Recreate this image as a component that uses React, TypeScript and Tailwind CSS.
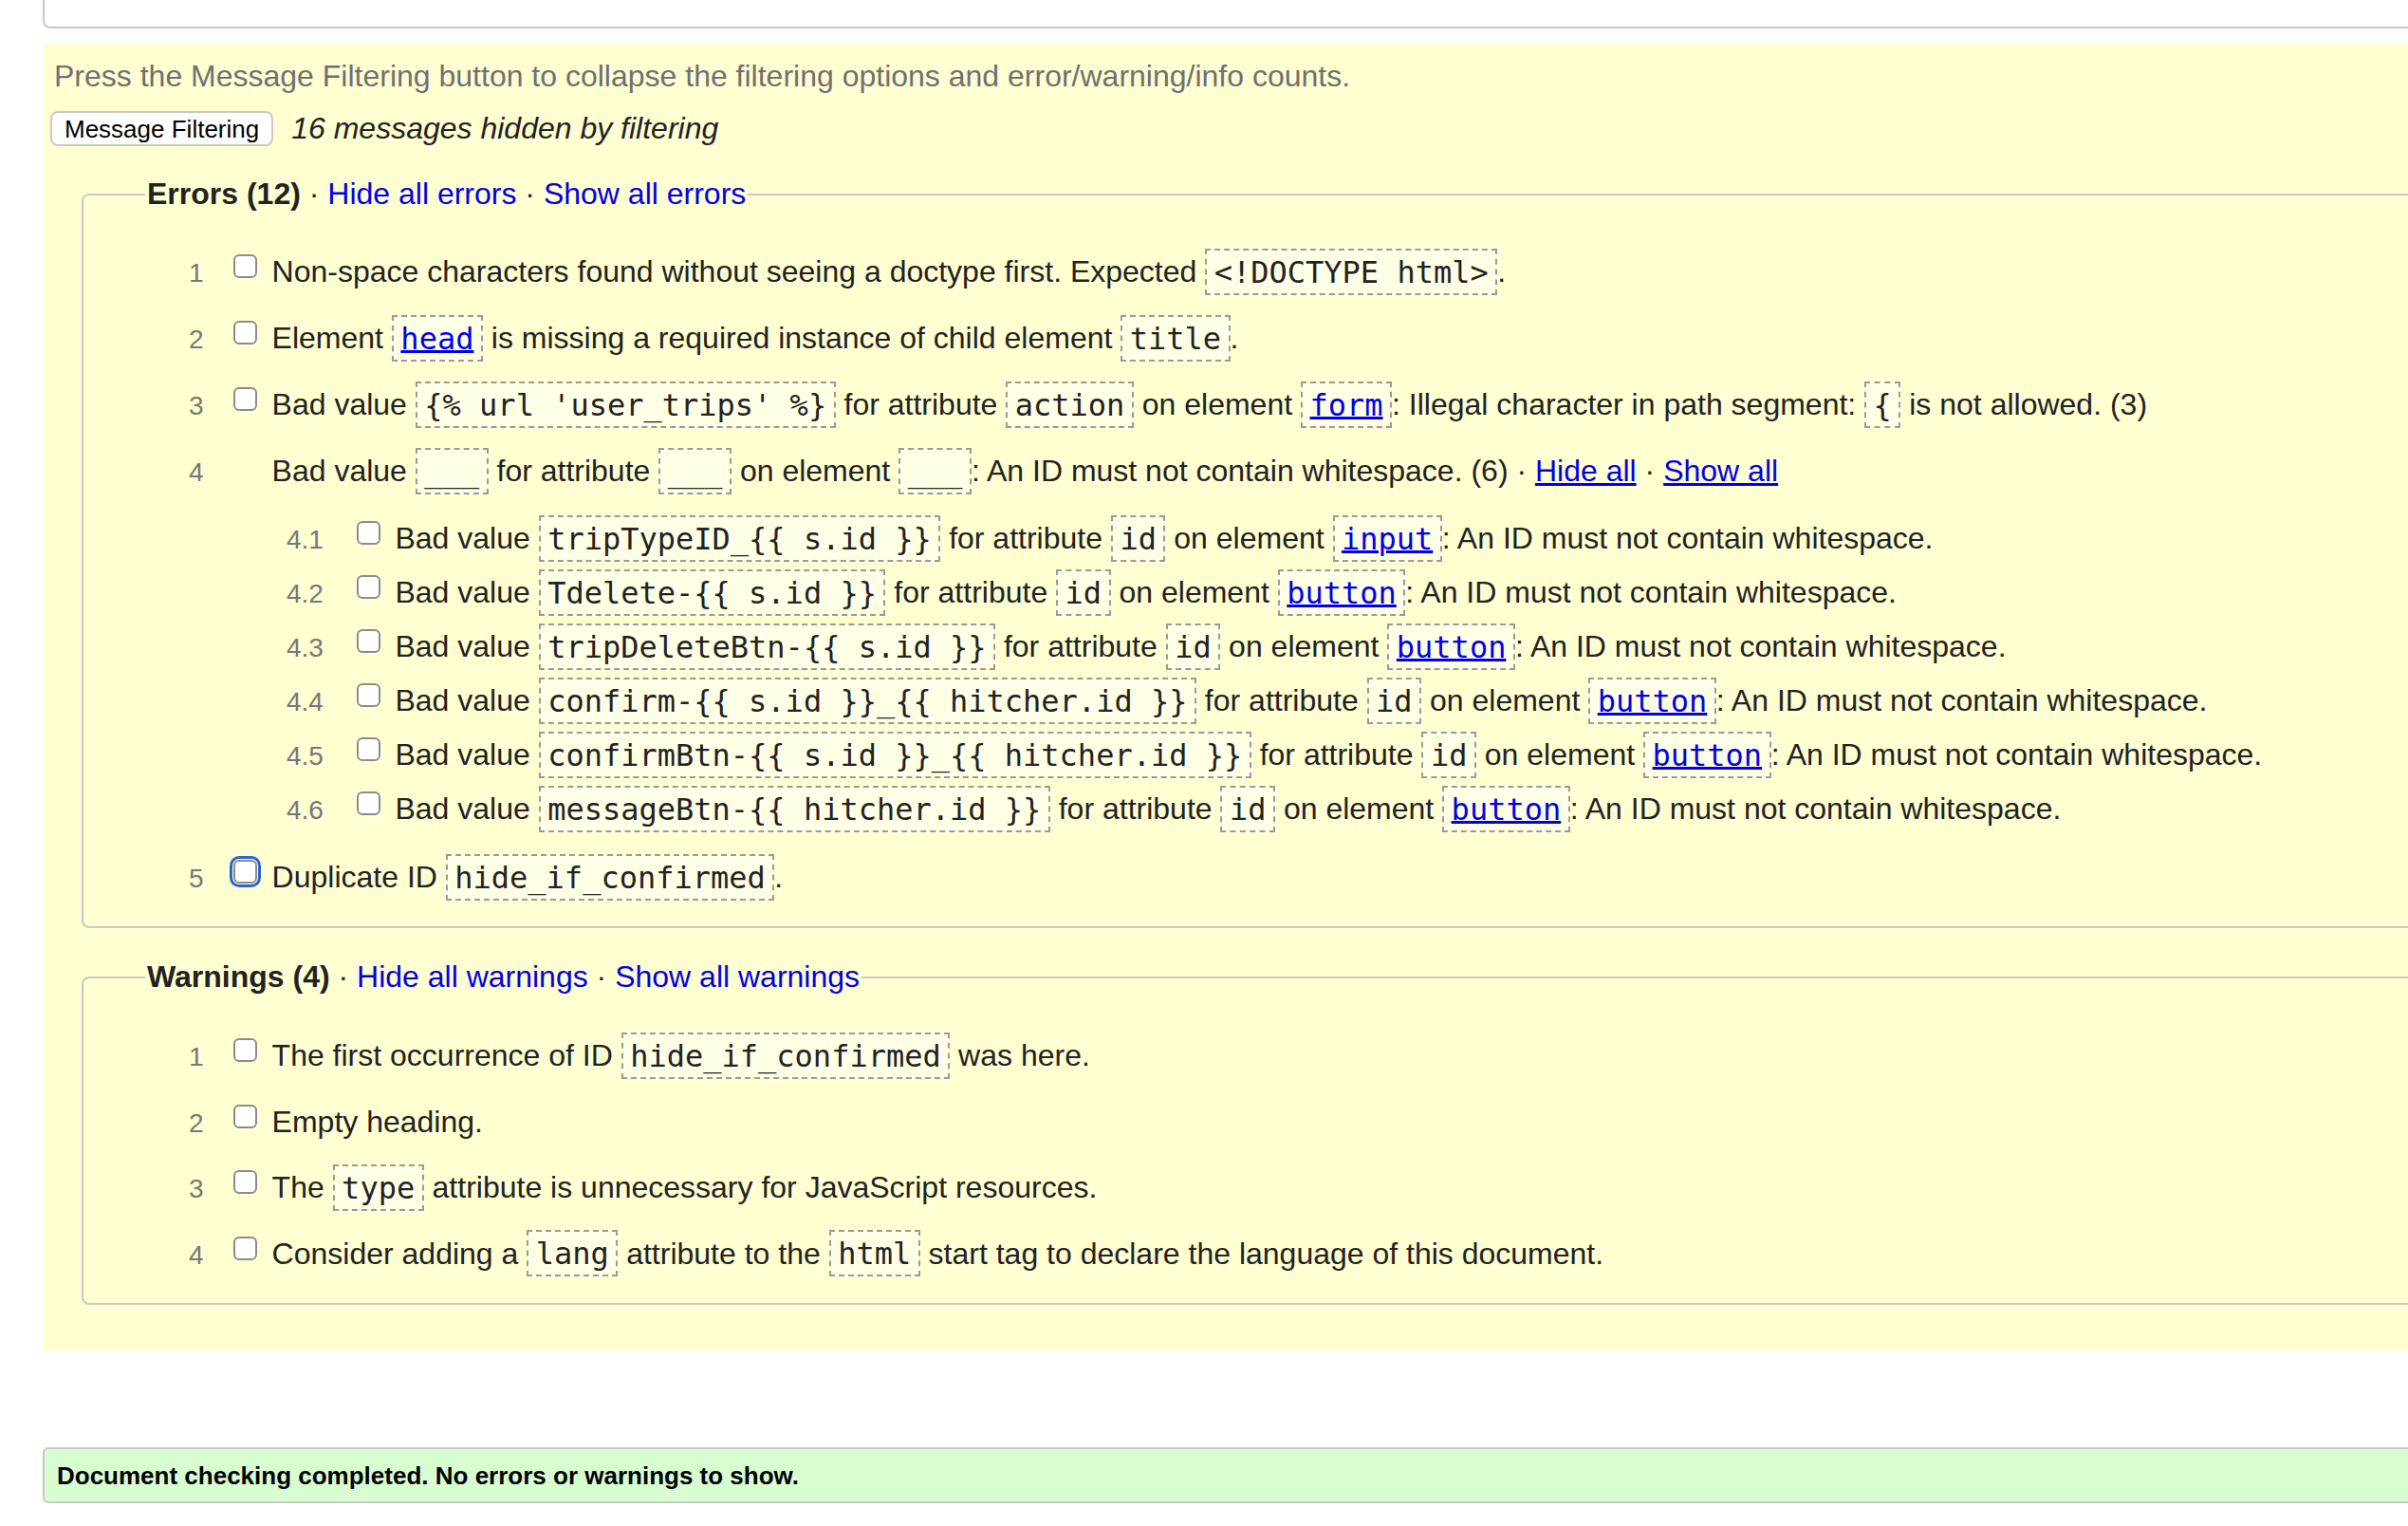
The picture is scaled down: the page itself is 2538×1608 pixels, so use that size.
import type { FC, ReactNode } from "react";

const Code: FC<{ children: ReactNode }> = ({ children }) => (
  <code className="font-['DejaVu_Sans_Mono',monospace] text-[32px] whitespace-pre border-2 border-dashed border-[#9a9a9a] bg-[#ffffe6] px-[7.5px] py-[3.5px]">
    {children}
  </code>
);

const CodeLink: FC<{ children: ReactNode }> = ({ children }) => (
  <Code>
    <a href="#" className="text-[#0000ee] underline decoration-[3px]">
      {children}
    </a>
  </Code>
);

const Link: FC<{ children: ReactNode; underline?: boolean }> = ({
  children,
  underline,
}) => (
  <a
    href="#"
    className={`text-[#0000ee] ${underline ? "underline decoration-[3px]" : ""}`}
  >
    {children}
  </a>
);

type RowProps = {
  num: string;
  sub?: boolean;
  noCheck?: boolean;
  focused?: boolean;
  children: ReactNode;
};

const Row: FC<RowProps> = ({ num, sub, noCheck, focused, children }) => (
  <div className="whitespace-nowrap leading-[37px]">
    <span className="text-[28px] leading-[30px] text-[#777]">{num}</span>
    <input
      type="checkbox"
      className={`${sub ? "ml-[35px]" : "ml-[31.5px]"} mb-[4px] inline-block align-baseline appearance-none w-[25px] h-[25px] border-2 border-[#8c8c8c] rounded-[6px] bg-white ${
        noCheck ? "invisible" : ""
      } ${focused ? "outline-3 outline-offset-1 outline-[#2a63d8]" : ""}`}
    />
    <span className="ml-[15.5px]">{children}</span>
  </div>
);

const Legend: FC<{ title: string; hide: string; show: string }> = ({
  title,
  hide,
  show,
}) => (
  <legend className="ml-[65px] px-[2px] leading-[37px]">
    <b>{title}</b> · <Link>{hide}</Link> · <Link>{show}</Link>
  </legend>
);

const subErrors = [
  { num: "4.1", value: "tripTypeID_{{ s.id }}", el: "input" },
  { num: "4.2", value: "Tdelete-{{ s.id }}", el: "button" },
  { num: "4.3", value: "tripDeleteBtn-{{ s.id }}", el: "button" },
  { num: "4.4", value: "confirm-{{ s.id }}_{{ hitcher.id }}", el: "button" },
  { num: "4.5", value: "confirmBtn-{{ s.id }}_{{ hitcher.id }}", el: "button" },
  { num: "4.6", value: "messageBtn-{{ hitcher.id }}", el: "button" },
];

export default function App() {
  return (
    <div className="w-[2538px] h-[1608px] overflow-hidden bg-white text-[32px] text-[#222] font-['Liberation_Sans',Arial,sans-serif]">
      {/* box above, mostly scrolled away */}
      <div className="ml-[45px] w-[2600px] h-[30px] border-2 border-t-0 border-[#c8c8c8] rounded-b-lg" />

      <div className="mt-[16px] ml-[45px] w-[2600px] bg-[#ffffd2] pl-[8px] pt-[15.5px] pb-[49.5px]">
        <p className="pl-[4px] leading-[37px] text-[#707070]">
          Press the Message Filtering button to collapse the filtering options
          and error/warning/info counts.
        </p>

        <div className="mt-[18.5px] flex items-center">
          <button className="h-[37px] px-[13px] border-2 border-[#c8c8c8] rounded-[8px] bg-white text-[26px] leading-[30px] text-black">
            Message Filtering
          </button>
          <span className="ml-[19px] italic leading-[37px]">
            16 messages hidden by filtering
          </span>
        </div>

        <fieldset className="mt-[32px] ml-[33px] border-2 border-[#c8c8c8] rounded-lg">
          <Legend title="Errors (12)" hide="Hide all errors" show="Show all errors" />
          <div className="pl-[111px] pt-[45px] pb-[33px] flex flex-col gap-[33px]">
            <Row num="1">
              Non-space characters found without seeing a doctype first.
              Expected <Code>{"<!DOCTYPE html>"}</Code>.
            </Row>
            <Row num="2">
              Element <CodeLink>head</CodeLink> is missing a required instance
              of child element <Code>title</Code>.
            </Row>
            <Row num="3">
              Bad value <Code>{"{% url 'user_trips' %}"}</Code> for attribute{" "}
              <Code>action</Code> on element <CodeLink>form</CodeLink>: Illegal
              character in path segment: <Code>{"{"}</Code> is not allowed. (3)
            </Row>
            <div className="pb-[2px]">
              <Row num="4" noCheck>
                Bad value <Code>___</Code> for attribute <Code>___</Code> on
                element <Code>___</Code>: An ID must not contain whitespace. (6)
                · <Link underline>Hide all</Link> ·{" "}
                <Link underline>Show all</Link>
              </Row>
              <div className="mt-[34px] pl-[103px] flex flex-col gap-[20px]">
                {subErrors.map((s) => (
                  <Row key={s.num} num={s.num} sub>
                    Bad value <Code>{s.value}</Code> for attribute{" "}
                    <Code>id</Code> on element <CodeLink>{s.el}</CodeLink>: An
                    ID must not contain whitespace.
                  </Row>
                ))}
              </div>
            </div>
            <Row num="5" focused>
              Duplicate ID <Code>hide_if_confirmed</Code>.
            </Row>
          </div>
        </fieldset>

        <fieldset className="mt-[33px] ml-[33px] border-2 border-[#c8c8c8] rounded-lg">
          <Legend
            title="Warnings (4)"
            hide="Hide all warnings"
            show="Show all warnings"
          />
          <div className="pl-[111px] pt-[46px] pb-[33px] flex flex-col gap-[32.5px]">
            <Row num="1">
              The first occurrence of ID <Code>hide_if_confirmed</Code> was
              here.
            </Row>
            <Row num="2">Empty heading.</Row>
            <Row num="3">
              The <Code>type</Code> attribute is unnecessary for JavaScript
              resources.
            </Row>
            <Row num="4">
              Consider adding a <Code>lang</Code> attribute to the{" "}
              <Code>html</Code> start tag to declare the language of this
              document.
            </Row>
          </div>
        </fieldset>
      </div>

      <div className="mt-[101px] ml-[45px] w-[2600px] border-2 border-[#c8c8c8] rounded-md bg-[#d8fdd0] pl-[13px] py-[12.5px] text-[26px] leading-[30px] font-bold text-black">
        Document checking completed. No errors or warnings to show.
      </div>
    </div>
  );
}
